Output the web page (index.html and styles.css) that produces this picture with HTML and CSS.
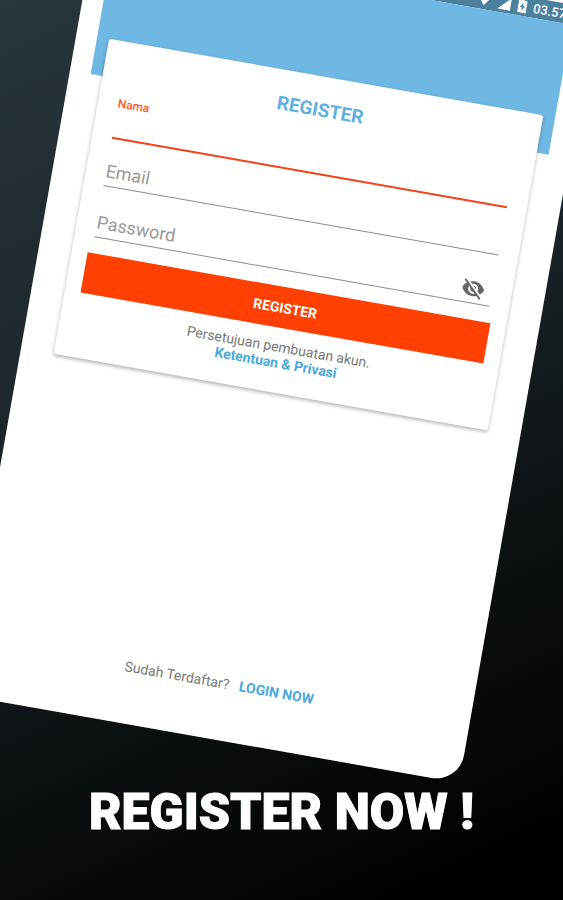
FILE: index.html
```html
<!DOCTYPE html>
<html lang="id">
<head>
    <meta charset="utf-8">
    <meta name="viewport" content="width=device-width, initial-scale=1">
    <title>Register</title>
    <link rel="stylesheet" href="styles.css">
</head>
<body>
    <div class="promo">
        <main class="phone">
            <div class="status-bar">
                <svg width="14" height="12" viewBox="0 0 14 12"><path d="M0 2.5C4 -.6 10 -.6 14 2.5L7 12z"/></svg>
                <svg width="13" height="13" viewBox="0 0 13 13"><path d="M13 0v13H0z"/></svg>
                <svg width="9" height="14" viewBox="0 0 9 14"><path fill-rule="evenodd" d="M3 0h3v1.5h2.2q.8 0 .8.8v10.9q0 .8-.8.8H.8Q0 14 0 13.2V2.3q0-.8.8-.8H3zM5 3.5L2 8.4h2V12l3-5H5z"/></svg>
                <span>03.57</span>
            </div>
            <div class="header"></div>
            <form class="card">
                <h2 class="title">REGISTER</h2>
                <div class="field active">
                    <label for="nama">Nama</label>
                    <input type="text" id="nama">
                </div>
                <div class="field email">
                    <input type="email" id="email" placeholder="Email" aria-label="Email">
                </div>
                <div class="field password">
                    <input type="password" id="password" placeholder="Password" aria-label="Password">
                    <button type="button" class="toggle" aria-label="Password">
                        <svg width="24" height="24" viewBox="0 0 24 24"><path d="M12 7c2.76 0 5 2.24 5 5 0 .65-.13 1.26-.36 1.83l2.92 2.92c1.51-1.26 2.7-2.89 3.43-4.75-1.73-4.39-6-7.5-11-7.5-1.4 0-2.74.25-3.98.7l2.16 2.16C10.74 7.13 11.35 7 12 7zM2 4.27l2.28 2.28.46.46C3.08 8.3 1.78 10.02 1 12c1.73 4.39 6 7.5 11 7.5 1.55 0 3.03-.3 4.38-.84l.42.42L19.73 22 21 20.73 3.27 3 2 4.27zM7.53 9.8l1.55 1.55c-.05.21-.08.43-.08.65 0 1.66 1.34 3 3 3 .22 0 .44-.03.65-.08l1.55 1.55c-.67.33-1.41.53-2.2.53-2.76 0-5-2.24-5-5 0-.79.2-1.53.53-2.2zm4.31-.78l3.15 3.15.02-.16c0-1.66-1.34-3-3-3l-.17.01z"/></svg>
                    </button>
                </div>
                <button type="submit" class="submit">REGISTER</button>
                <p class="terms">Persetujuan pembuatan akun.<br><a href="#">Ketentuan &amp; Privasi</a></p>
            </form>
            <p class="login">Sudah Terdaftar? <a href="#">LOGIN NOW</a></p>
        </main>
        <h1 class="slogan">REGISTER NOW !</h1>
    </div>
</body>
</html>
```
FILE: styles.css
```css
* {
    box-sizing: border-box;
}
body {
    margin: 0;
    font-family: Roboto, "Liberation Sans", sans-serif;
    background-color: #000;
}
h1, h2, p {
    margin: 0;
}
a {
    color: #4aa8dc;
    font-weight: 700;
    text-decoration: none;
}
.promo {
    display: flex;
    flex-direction: column;
    min-height: 100vh;
    overflow: hidden;
    background: linear-gradient(155deg, #28353c 0%, #1d272c 35%, #0a0f11 70%, #000 95%);
}

/* tilted phone */
.phone {
    display: flex;
    flex-direction: column;
    flex-shrink: 0;
    width: 90%;
    min-height: calc(100vh - 93px);
    margin: -100px 0 0 100px;
    padding: 21px;
    border-radius: 28px;
    background-color: #fff;
    transform: rotate(10deg);
    transform-origin: top left;
}
.status-bar {
    display: flex;
    align-items: center;
    justify-content: flex-end;
    gap: 7px;
    height: 20px;
    padding-right: 7px;
    background-color: #4b809f;
    color: #fff;
    font-size: 13px;
    font-weight: 500;
}
.status-bar svg {
    fill: #fff;
}
.header {
    height: 132px;
    background-color: #6fb8e3;
}

/* form card */
.card {
    display: flex;
    flex-direction: column;
    margin: -38px 12px 0;
    padding: 22px 16px;
    border-radius: 3px;
    background-color: #fff;
    box-shadow: 0 2px 4px rgba(0, 0, 0, 0.3);
}
.title {
    color: #5fb0df;
    font-size: 19px;
    font-weight: 700;
    line-height: 24px;
    text-align: center;
}
.field {
    position: relative;
    display: flex;
    flex-direction: column;
    margin: 8px 4px 0;
}
.field.email {
    margin-top: 18px;
}
.field.password {
    margin-top: 22px;
}
.field label {
    color: #ff5a2b;
    font-size: 12px;
    font-weight: 500;
    line-height: 16px;
}
.field input {
    width: 100%;
    height: 30px;
    padding: 0;
    border: 0;
    border-bottom: 1px solid #8c8c8c;
    background: none;
    font: 18px Roboto, "Liberation Sans", sans-serif;
    outline: none;
}
.field input::placeholder {
    color: #999;
    opacity: 1;
}
.field.active input {
    height: 28px;
    border-bottom: 2px solid #f4421a;
}
.toggle {
    position: absolute;
    right: 7px;
    bottom: 3px;
    display: flex;
    padding: 0;
    border: 0;
    background: none;
}
.toggle svg {
    fill: #666;
}
.submit {
    height: 41px;
    margin-top: 16px;
    border: 0;
    background-color: #ff4000;
    color: #fff;
    font: 700 14px Roboto, "Liberation Sans", sans-serif;
}
.terms {
    margin-top: 11px;
    color: #777;
    font-size: 14px;
    line-height: 16px;
    text-align: center;
}
.login {
    display: flex;
    justify-content: center;
    gap: 10px;
    margin: auto 0 28px;
    color: #777;
    font-size: 14px;
    line-height: 16px;
}

.slogan {
    margin: 75px 0 28px;
    color: #fff;
    font-size: 50px;
    font-weight: 900;
    line-height: 60px;
    text-align: center;
    -webkit-text-stroke: 1px #fff;
}
```
